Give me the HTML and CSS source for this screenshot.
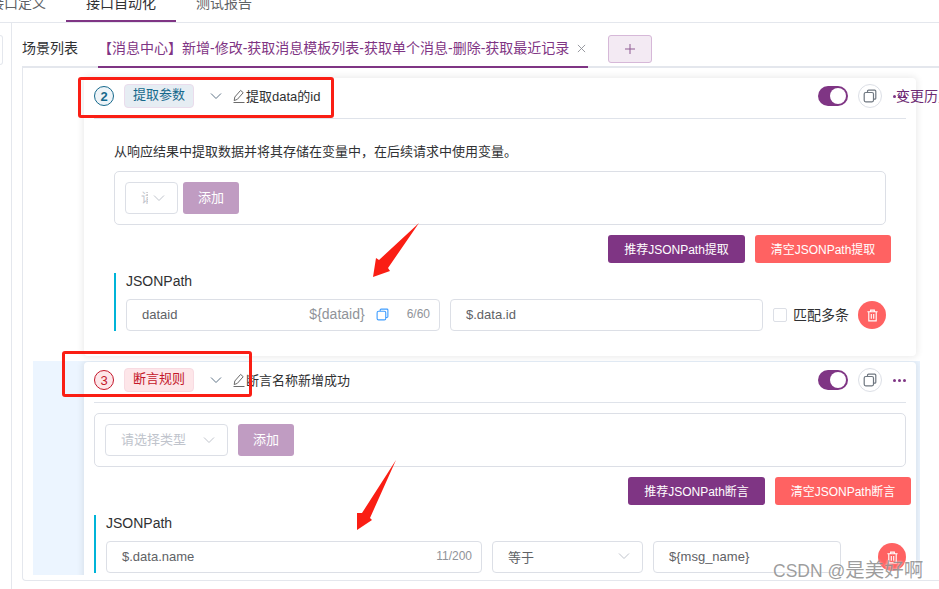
FILE: index.html
```html
<!DOCTYPE html>
<html lang="zh-CN">
<head>
<meta charset="utf-8">
<title>接口自动化</title>
<link rel="stylesheet" href="styles.css">
</head>
<body>
<svg class="defs" width="0" height="0" aria-hidden="true">
  <symbol id="i-chev" viewBox="0 0 14 14"><path d="M2 4.5 7 9.5 12 4.5" fill="none" stroke="currentColor" stroke-width="1"/></symbol>
  <symbol id="i-pen" viewBox="0 0 14 14"><path d="M1.5 13.5h11M2.2 11.6 2.8 8 8.6 1.4l2.6 2.3-5.8 6.6z" fill="none" stroke="currentColor" stroke-width="1"/></symbol>
  <symbol id="i-copy" viewBox="0 0 14 14"><path d="M4.5 3.3V2.2a1 1 0 0 1 1-1h6.3a1 1 0 0 1 1 1v7a1 1 0 0 1-1 1h-1.3" fill="none" stroke="currentColor" stroke-width="1.2"/><rect x="1.2" y="3.5" width="9.3" height="9.3" rx="1.5" fill="none" stroke="currentColor" stroke-width="1.2"/></symbol>
  <symbol id="i-trash" viewBox="0 0 14 14"><path d="M1.5 3h11M5 3V1.2h4V3M3 3v9.8h8V3M5.7 5.5v5M8.3 5.5v5" fill="none" stroke="currentColor" stroke-width="1.2"/></symbol>
  <symbol id="i-x" viewBox="0 0 10 10"><path d="M1 1 9 9M9 1 1 9" fill="none" stroke="currentColor" stroke-width="1"/></symbol>
  <symbol id="i-plus" viewBox="0 0 10 10"><path d="M5 0v10M0 5h10" fill="none" stroke="currentColor" stroke-width="1"/></symbol>
</svg>
<div class="page">
  <nav class="top-bar">
    <span class="top-tab">接口定义</span>
    <span class="top-tab is-active">接口自动化</span>
    <span class="top-tab">测试报告</span>
  </nav>
  <div class="layout">
    <div class="stub"></div>
    <main class="main">
      <div class="tabs">
        <span class="tab">场景列表</span>
        <span class="tab is-active">【消息中心】新增-修改-获取消息模板列表-获取单个消息-删除-获取最近记录<svg class="tab-close"><use href="#i-x"/></svg></span>
        <button class="tab-add"><svg class="plus"><use href="#i-plus"/></svg></button>
      </div>
      <div class="scene-box">
        <section class="step-row">
          <div class="card">
            <header class="card-head">
              <span class="num num-blue">2</span>
              <span class="tag tag-blue">提取参数</span>
              <svg class="chev-head"><use href="#i-chev"/></svg>
              <svg class="pen"><use href="#i-pen"/></svg>
              <span class="step-name">提取data的id</span>
              <div class="head-actions">
                <span class="switch"><span class="knob"></span></span>
                <span class="round-btn"><svg class="copy-gray"><use href="#i-copy"/></svg></span>
                <span class="more"><i></i><i></i><i></i><span class="more-text">变更历史</span></span>
              </div>
            </header>
            <div class="card-body body-extract">
              <p class="desc">从响应结果中提取数据并将其存储在变量中，在后续请求中使用变量。</p>
              <div class="add-box">
                <div class="select select-narrow"><span class="placeholder">请选择类型</span><svg class="chev"><use href="#i-chev"/></svg></div>
                <button class="btn-add">添加</button>
              </div>
              <div class="btn-row">
                <button class="btn btn-purple">推荐JSONPath提取</button>
                <button class="btn btn-red">清空JSONPath提取</button>
              </div>
              <div class="json-block">
                <div class="json-label">JSONPath</div>
                <div class="json-row">
                  <div class="field field-name">
                    <span class="grow">dataid</span>
                    <span class="muted">${dataid}</span>
                    <svg class="copy-blue"><use href="#i-copy"/></svg>
                    <span class="count count-name">6/60</span>
                  </div>
                  <div class="field field-path"><span>$.data.id</span></div>
                  <span class="check"></span>
                  <span class="check-label">匹配多条</span>
                  <span class="del"><svg><use href="#i-trash"/></svg></span>
                </div>
              </div>
            </div>
          </div>
        </section>
        <section class="step-row step-row-active">
          <div class="card">
            <header class="card-head">
              <span class="num num-red">3</span>
              <span class="tag tag-red">断言规则</span>
              <svg class="chev-head"><use href="#i-chev"/></svg>
              <svg class="pen"><use href="#i-pen"/></svg>
              <span class="step-name">断言名称新增成功</span>
              <div class="head-actions">
                <span class="switch"><span class="knob"></span></span>
                <span class="round-btn"><svg class="copy-gray"><use href="#i-copy"/></svg></span>
                <span class="more"><i></i><i></i><i></i></span>
              </div>
            </header>
            <div class="card-body body-assert">
              <div class="add-box">
                <div class="select select-wide"><span class="placeholder">请选择类型</span><svg class="chev"><use href="#i-chev"/></svg></div>
                <button class="btn-add">添加</button>
              </div>
              <div class="btn-row">
                <button class="btn btn-purple">推荐JSONPath断言</button>
                <button class="btn btn-red">清空JSONPath断言</button>
              </div>
              <div class="json-block">
                <div class="json-label">JSONPath</div>
                <div class="json-row">
                  <div class="field field-expr">
                    <span class="grow">$.data.name</span>
                    <span class="count count-expr">11/200</span>
                  </div>
                  <div class="field field-op">
                    <span class="grow">等于</span>
                    <svg class="chev"><use href="#i-chev"/></svg>
                  </div>
                  <div class="field field-value"><span>${msg_name}</span></div>
                  <span class="del del-assert"><svg><use href="#i-trash"/></svg></span>
                </div>
              </div>
            </div>
          </div>
        </section>
      </div>
    </main>
  </div>

  <div class="mark mark-one"></div>
  <div class="mark mark-two"></div>
  <svg class="arrows" width="939" height="589" aria-hidden="true">
    <polygon points="419,223 388,268 390,271 373,277 376,258 379,260"/>
    <polygon points="396,460 370,518 372,520 357,530 357,513 362,513"/>
  </svg>
  <div class="watermark">CSDN @<span class="watermark-name">是美好啊</span></div>
</div>
</body>
</html>
```

FILE: styles.css
```css
* { box-sizing: border-box; }

html, body {
  margin: 0;
  padding: 0;
  background: #fff;
}

body {
  font-family: "Liberation Sans", "Noto Sans CJK SC", sans-serif;
  font-size: 13px;
  color: #303133;
}

.defs { position: absolute; }

.page {
  position: relative;
  width: 939px;
  height: 589px;
  overflow: hidden;
}

/* top tabs */
.top-bar {
  display: flex;
  height: 23px;
  margin-left: -30px;
  border-bottom: 1px solid #e4e7ed;
}

.top-tab {
  height: 22px;
  padding: 0 20px;
  font-size: 14px;
  line-height: 6px;
  color: #606266;
  white-space: nowrap;
}

.top-tab.is-active {
  color: #303133;
  border-bottom: 2px solid #7f3584;
}

.layout {
  display: flex;
  height: 566px;
}

.stub {
  flex: none;
  width: 3px;
  height: 30px;
  margin-top: 12px;
  border: 1px solid #e4e7ed;
  border-left: 0;
  border-radius: 0 3px 3px 0;
}

.main {
  flex: none;
  width: 928px;
  margin-left: 8px;
  padding-left: 10px;
  border-left: 1px solid #e4e7ed;
}

/* scenario tabs */
.tabs {
  display: flex;
  align-items: flex-start;
  height: 45px;
  padding-top: 12px;
  border-bottom: 2px solid #e4e7ed;
}

.tab {
  height: 33px;
  padding-right: 20px;
  font-size: 14px;
  line-height: 26px;
  white-space: nowrap;
  color: #303133;
}

.tab.is-active {
  display: flex;
  width: 490px;
  padding-right: 0;
  color: #7f3584;
  border-bottom: 2px solid #7f3584;
}

.tab-close {
  flex: none;
  width: 9px;
  height: 9px;
  margin: 9px 0 0 8px;
  color: #8d8f96;
}

.tab-add {
  display: flex;
  align-items: center;
  justify-content: center;
  width: 44px;
  height: 28px;
  margin-left: 20px;
  padding: 0;
  color: #8f5a93;
  background: #f3eaf3;
  border: 1px solid #d6b8d8;
  border-radius: 3px;
}

.plus {
  width: 10px;
  height: 10px;
}

.scene-box {
  width: 1000px;
  height: 513px;
  padding-left: 10px;
  border-left: 1px solid #e4e7ed;
  border-bottom: 1px solid #e4e7ed;
  border-radius: 0 0 0 4px;
}

.step-row {
  width: 887px;
  padding: 10px 4px 5px 51px;
}

.step-row-active {
  height: 214px;
  padding-top: 1px;
  padding-bottom: 0;
  overflow: hidden;
  background: #ecf5ff;
}

.card {
  background: #fff;
  border-radius: 4px;
  box-shadow: 0 0 6px 2px rgba(0, 0, 0, .07);
}

.card-head {
  display: flex;
  align-items: center;
  height: 41px;
  margin: 0 10px;
  padding-bottom: 4px;
  border-bottom: 1px solid #dfe3ea;
}

.num {
  display: flex;
  align-items: center;
  justify-content: center;
  flex: none;
  width: 20px;
  height: 20px;
  margin-right: 10px;
  font-size: 13px;
  font-weight: 700;
  border-radius: 50%;
  border: 1.5px solid;
}

.num-blue { color: #16698c; border-color: #16698c; background: #eef4f8; }
.num-red { color: #c4162a; border-color: #c4162a; background: #fde6e9; font-weight: 400; }

.tag {
  flex: none;
  width: 70px;
  height: 24px;
  font-size: 13px;
  line-height: 20px;
  text-align: center;
  border-radius: 4px;
  border: 1px solid;
}

.tag-blue { color: #16698c; background: #e6edf3; border-color: #eadcec; }
.tag-red { color: #c4162a; background: #fde6e9; border-color: #f8dbe2; }

.chev-head {
  flex: none;
  width: 14px;
  height: 14px;
  margin-left: 15px;
  color: #5f7487;
}

.pen {
  flex: none;
  width: 14px;
  height: 14px;
  margin-left: 9px;
  color: #6b6b6b;
}

.step-name {
  padding-bottom: 2px;
  font-size: 13px;
  white-space: nowrap;
}

.head-actions {
  display: flex;
  align-items: center;
  margin-left: auto;
}

.switch {
  display: flex;
  justify-content: flex-end;
  align-items: center;
  width: 30px;
  height: 20px;
  padding-right: 2px;
  background: #7f3584;
  border-radius: 10px;
}

.knob {
  width: 16px;
  height: 16px;
  background: #fff;
  border-radius: 50%;
}

.round-btn {
  display: flex;
  align-items: center;
  justify-content: center;
  width: 24px;
  height: 24px;
  margin-left: 10px;
  border: 1px solid #dcdfe6;
  border-radius: 50%;
}

.copy-gray {
  width: 14px;
  height: 14px;
  color: #6f7780;
}

.more {
  position: relative;
  display: flex;
  gap: 2px;
  width: 13px;
  margin-left: 11px;
}

.more i {
  width: 3px;
  height: 3px;
  background: #7f3584;
  border-radius: 50%;
}

.more-text {
  position: absolute;
  left: 3px;
  top: -9px;
  font-size: 14px;
  line-height: 20px;
  color: #6d2a73;
  white-space: nowrap;
}

.card-body {
  display: flex;
  flex-direction: column;
}

.body-extract {
  padding: 24px 25px 25px 30px;
}

.body-assert {
  padding: 10px 5px 25px 10px;
}

.desc {
  margin: 0 0 10px;
  font-size: 13px;
  line-height: 18px;
  white-space: nowrap;
}

.add-box {
  display: flex;
  height: 54px;
  margin-right: 5px;
  padding: 10px;
  border: 1px solid #dcdfe6;
  border-radius: 5px;
}

.select {
  display: flex;
  align-items: center;
  height: 32px;
  padding: 0 11px 0 15px;
  border: 1px solid #dcdfe6;
  border-radius: 4px;
  color: #c0c4cc;
}

.select-narrow { width: 53px; margin-right: 5px; }
.select-wide { width: 123px; margin-right: 10px; }

.placeholder {
  flex: 1;
  min-width: 0;
  margin-right: 4px;
  padding-bottom: 3px;
  overflow: hidden;
  white-space: nowrap;
  font-size: 13px;
}

.chev {
  flex: none;
  width: 14px;
  height: 14px;
  color: #c0c4cc;
}

.btn-add {
  width: 56px;
  height: 32px;
  padding: 0 0 3px;
  font-family: inherit;
  font-size: 13px;
  color: #fff;
  background: #c09cc2;
  border: 0;
  border-radius: 3px;
}

.btn-row {
  display: flex;
  justify-content: flex-end;
  gap: 10px;
  margin: 10px 0;
}

.btn {
  height: 28px;
  padding: 0 0 2px;
  font-family: inherit;
  font-size: 12px;
  color: #fff;
  white-space: nowrap;
  border: 0;
  border-radius: 3px;
}

.btn-purple { width: 137px; background: #7f3584; }
.btn-red { width: 136px; background: #ff6262; }

.json-block {
  padding-left: 10px;
  border-left: 2px solid #00b4d8;
}

.json-label {
  margin-bottom: 10px;
  font-size: 14px;
  line-height: 16px;
}

.json-row {
  display: flex;
  align-items: center;
  gap: 10px;
}

.field {
  display: flex;
  align-items: center;
  flex: none;
  height: 32px;
  padding: 0 15px 2px;
  font-size: 13px;
  color: #606266;
  border: 1px solid #dcdfe6;
  border-radius: 4px;
  white-space: nowrap;
}

.grow { flex: 1; }

.muted {
  font-size: 14px;
  color: #909399;
}

.field-name { width: 314px; padding-right: 9px; }
.field-path { width: 313px; }
.field-expr { width: 376px; padding-right: 9px; }
.field-op { width: 151px; padding-right: 11px; }
.field-value { width: 188px; }

.copy-blue {
  flex: none;
  width: 13px;
  height: 13px;
  margin-left: 11px;
  color: #409eff;
}

.count {
  font-size: 12px;
  color: #909399;
}

.count-name { margin-left: 18px; }

.check {
  flex: none;
  width: 14px;
  height: 14px;
  border: 1px solid #dcdfe6;
  border-radius: 2px;
}

.check-label {
  width: 55px;
  margin-left: -4px;
  padding-bottom: 2px;
  font-size: 14px;
  white-space: nowrap;
}

.del {
  display: flex;
  align-items: center;
  justify-content: center;
  flex: none;
  width: 28px;
  height: 28px;
  color: #fff;
  background: #ff6262;
  border-radius: 50%;
}

.del svg {
  width: 13px;
  height: 13px;
}

.del-assert { margin-left: 27px; }

/* screenshot annotations, drawn over the page */
.mark {
  position: absolute;
  border: 3px solid #fa1e14;
  border-radius: 3px;
}

.mark-one { left: 78px; top: 77px; width: 256px; height: 41px; }
.mark-two { left: 62px; top: 351px; width: 190px; height: 46px; }

.arrows {
  position: absolute;
  left: 0;
  top: 0;
  fill: #fa1e14;
}

.watermark {
  position: absolute;
  left: 773px;
  top: 559px;
  font-size: 17.5px;
  line-height: 22px;
  color: rgba(125, 125, 125, .75);
  text-shadow: 0 0 2px rgba(255, 255, 255, .9);
  white-space: nowrap;
}

.watermark-name { font-size: 19.5px; }
```
